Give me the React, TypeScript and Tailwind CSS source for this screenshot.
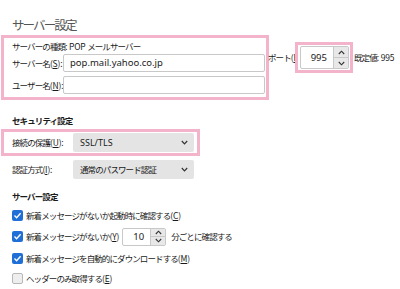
function Spin() {
  return (
    <div className="flex flex-col w-[15px] h-full border-l border-[#c8c8c8] shrink-0">
      <div className="flex-1 flex items-center justify-center bg-[#e8e8e8] border-b border-[#c8c8c8]">
        <svg width="7" height="5" viewBox="0 0 7 5"><path d="M0.8 4 L3.5 1.2 L6.2 4" fill="none" stroke="#333" strokeWidth="1.1" /></svg>
      </div>
      <div className="flex-1 flex items-center justify-center bg-[#e8e8e8]">
        <svg width="7" height="5" viewBox="0 0 7 5"><path d="M0.8 1 L3.5 3.8 L6.2 1" fill="none" stroke="#333" strokeWidth="1.1" /></svg>
      </div>
    </div>
  )
}

function Chevron() {
  return (
    <svg width="7" height="5" viewBox="0 0 7 5" className="ml-auto shrink-0">
      <path d="M0.8 1 L3.5 3.8 L6.2 1" fill="none" stroke="#333" strokeWidth="1.2" />
    </svg>
  )
}

function Check({ on }: { on: boolean }) {
  return on ? (
    <span className="w-[11px] h-[11px] rounded-[2px] bg-[#1f6fd6] flex items-center justify-center shrink-0">
      <svg width="9" height="9" viewBox="0 0 9 9"><path d="M1.5 4.6 L3.6 6.7 L7.6 2.2" fill="none" stroke="#fff" strokeWidth="1.4" /></svg>
    </span>
  ) : (
    <span className="w-[11px] h-[11px] rounded-[2px] bg-[#eeeeee] border border-[#b8b8b8] shrink-0" />
  )
}

// latin fragments keep normal spacing so they don't collapse
function L({ children }: { children: React.ReactNode }) {
  return <span className="tracking-[-0.2px]">{children}</span>
}

export default function App() {
  return (
    <div className="w-[400px] h-[289px] bg-white overflow-hidden text-[8.5px] tracking-[-0.9px] text-[#1a1a1a] whitespace-nowrap font-['Noto_Sans_CJK_JP',sans-serif]">
      <div className="pl-3 pt-[15px] h-[35px] text-[12.5px] tracking-[-1.9px] text-[#555] leading-[20px]">サーバー設定</div>

      <div className="flex items-start">
        <div className="ml-[1px] w-[268px] h-[65px] border-[3px] border-[#f3b3cb] pl-[8px] pr-[1px] pt-[2px]">
          <div className="h-[13px] leading-[13px]">サーバーの種類<L>: POP </L>メールサーバー</div>
          <div className="flex items-center h-[18px] mt-[1px]">
            <span className="w-[51px] shrink-0">サーバー名<L>(<u>S</u>):</L></span>
            <div className="flex-1 min-w-0 h-[18px] border border-[#c8c8c8] rounded-[2px] pl-[6px] leading-[16px] text-[9.5px] tracking-normal font-['Noto_Sans',sans-serif]">pop.mail.yahoo.co.jp</div>
          </div>
          <div className="flex items-center h-[18px] mt-[4px]">
            <span className="w-[51px] shrink-0">ユーザー名<L>(<u>N</u>):</L></span>
            <div className="flex-1 min-w-0 h-[18px] border border-[#c8c8c8] rounded-[2px]" />
          </div>
        </div>

        <div className="flex items-center mt-[7px] -ml-[1px]">
          <span className="w-[27px] shrink-0 overflow-hidden">ポート<L>(<u>P</u>)</L></span>
          <div className="w-[58px] h-[31px] shrink-0 border-[3px] border-[#f3b3cb] p-[1px] pl-[2px]">
            <div className="flex h-full border border-[#c8c8c8] rounded-[2px] bg-white">
              <span className="flex-1 text-right pr-[6px] leading-[21px] text-[9.5px] tracking-normal font-['Noto_Sans',sans-serif]">995</span>
              <Spin />
            </div>
          </div>
          <span className="ml-[1px]">既定値<L>: 995</L></span>
        </div>
      </div>

      <div className="pl-3 mt-[13px] h-[15px] leading-[15px] font-bold">セキュリティ設定</div>

      <div className="ml-[1px] mt-[1px] w-[199px] h-[27px] border-[3px] border-[#f3b3cb] flex items-center pl-[8px] pr-[3px]">
        <span className="w-[61px] shrink-0">接続の保護<L>(<u>U</u>):</L></span>
        <div className="flex-1 h-[19px] bg-[#e4e4e4] rounded-[2px] flex items-center pl-[7px] pr-[6px]">
          <span className="text-[9px] tracking-normal font-['Noto_Sans',sans-serif]">SSL/TLS</span>
          <Chevron />
        </div>
      </div>

      <div className="flex items-center pl-3 mt-[4px] h-[19px]">
        <span className="w-[61px] shrink-0">認証方式<L>(<u>I</u>):</L></span>
        <div className="w-[121px] h-[19px] bg-[#e4e4e4] rounded-[2px] flex items-center pl-[7px] pr-[6px]">
          <span>通常のパスワード認証</span>
          <Chevron />
        </div>
      </div>

      <div className="pl-3 mt-[10px] h-[15px] leading-[15px] font-bold">サーバー設定</div>

      <div className="pl-3 mt-[4px] flex flex-col">
        <div className="flex items-center h-[14px] gap-[3px]">
          <Check on />
          <span>新着メッセージがないか起動時に確認する<L>(<u>C</u>)</L></span>
        </div>
        <div className="flex items-center h-[19px] mt-[5px] gap-[3px]">
          <Check on />
          <span>新着メッセージがないか<L>(<u>Y</u>)</L></span>
          <div className="w-[44px] h-[18px] flex border border-[#c8c8c8] rounded-[2px] bg-white">
            <span className="flex-1 text-right pr-[6px] leading-[16px] text-[9.5px] tracking-normal font-['Noto_Sans',sans-serif]">10</span>
            <Spin />
          </div>
          <span className="ml-[2px]">分ごとに確認する</span>
        </div>
        <div className="flex items-center h-[14px] mt-[5px] gap-[3px]">
          <Check on />
          <span>新着メッセージを自動的にダウンロードする<L>(<u>M</u>)</L></span>
        </div>
        <div className="flex items-center h-[14px] mt-[6px] gap-[3px]">
          <Check on={false} />
          <span>ヘッダーのみ取得する<L>(<u>E</u>)</L></span>
        </div>
      </div>
    </div>
  )
}
